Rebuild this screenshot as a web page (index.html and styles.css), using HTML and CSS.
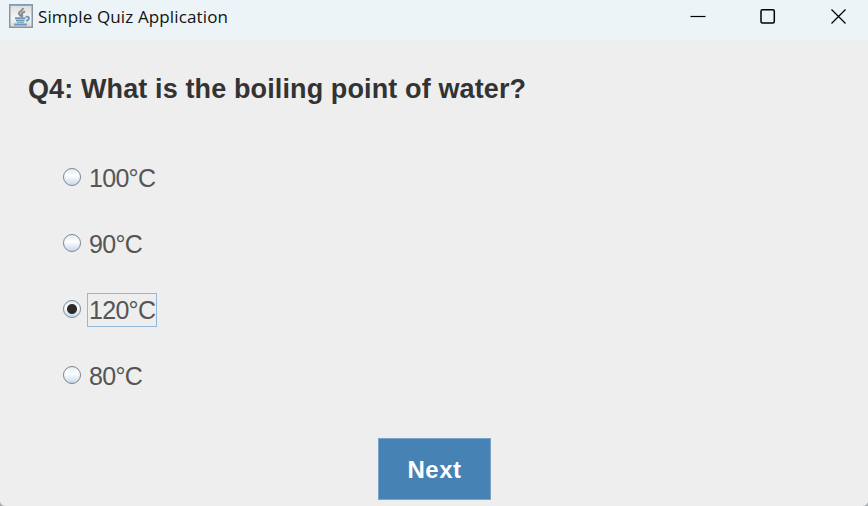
FILE: index.html
```html
<!DOCTYPE html>
<html lang="en">
<head>
    <meta charset="UTF-8">
    <meta name="viewport" content="width=device-width, initial-scale=1.0">
    <title>Simple Quiz Application</title>
    <link rel="stylesheet" href="styles.css">
</head>
<body>
    <div class="window">
        <header class="title-bar">
            <svg class="app-icon" width="24" height="24" viewBox="0 0 24 24">
                <defs>
                    <linearGradient id="icon-bg" x1="0" y1="0" x2="0" y2="1">
                        <stop offset="0" stop-color="#dcdcdc"/>
                        <stop offset="0.6" stop-color="#f6f6f6"/>
                        <stop offset="1" stop-color="#d4d8db"/>
                    </linearGradient>
                </defs>
                <rect x="0.75" y="0.75" width="22.5" height="22.5" fill="url(#icon-bg)" stroke="#8b959d" stroke-width="1.5"/>
                <path d="M1 1h22" stroke="#7ca0c0" stroke-width="1.5"/>
                <path d="M14 4c.5 2.500-4.500 3.500-4 5.500.2 1.300 1.800 1.800 1.500 3.200M16 7.500c-2.500 1-4 2-3 3.300.7 1 .3 1.700-.6 2.200" fill="none" stroke="#85898c" stroke-width="2"/>
                <path d="M6 14.200h10.500M7 16.600h8.500M5 20.500h13" fill="none" stroke="#6c98bd" stroke-width="1.900"/>
                <path d="M8 18.500h7" fill="none" stroke="#8aabc6" stroke-width="1"/>
                <path d="M16.500 12.800c4.500-1 4.500 3 .5 4" fill="none" stroke="#6c98bd" stroke-width="1.900"/>
            </svg>
            <span class="title">Simple Quiz Application</span>
            <div class="controls">
                <svg width="16" height="16" viewBox="0 0 16 16">
                    <path d="M0.500 8.500h15" stroke="#000" stroke-width="1.200"/>
                </svg>
                <svg width="16" height="16" viewBox="0 0 16 16">
                    <rect x="1" y="1.700" width="13.300" height="13.300" rx="1.500" fill="none" stroke="#000" stroke-width="1.500"/>
                </svg>
                <svg width="16" height="16" viewBox="0 0 16 16">
                    <path d="M1.500 1.500l14 14M15.500 1.500l-14 14" stroke="#000" stroke-width="1.300"/>
                </svg>
            </div>
        </header>

        <main class="quiz">
            <h1 class="question">Q4: What is the boiling point of water?</h1>
            <div class="options">
                <label class="option"><span class="radio"></span><span class="label">100°C</span></label>
                <label class="option"><span class="radio"></span><span class="label">90°C</span></label>
                <label class="option"><span class="radio selected"></span><span class="label focused">120°C</span></label>
                <label class="option"><span class="radio"></span><span class="label">80°C</span></label>
            </div>
            <button class="next-button">Next</button>
        </main>
    </div>
</body>
</html>
```

FILE: styles.css
```css
body {
    margin: 0;
    background-color: #a6aaac;
    font-family: "Liberation Sans", Arial, sans-serif;
    color: #333;
}

.window {
    height: 506px;
    background-color: #eee;
    border-radius: 0 0 5px 5px;
    overflow: hidden;
}

.title-bar {
    display: flex;
    height: 40px;
    box-sizing: border-box;
    padding: 4px 22px 0 9px;
    background-color: #ecf4f8;
}

.app-icon {
    flex: none;
}

.title {
    margin-left: 5px;
    font-family: "Open Sans", "Noto Sans", sans-serif;
    font-size: 17px;
    line-height: 26px;
    letter-spacing: 0.13px;
    color: #111;
    white-space: nowrap;
}

.controls {
    display: flex;
    gap: 54px;
    margin-left: auto;
    padding-top: 4px;
}

.quiz {
    display: flex;
    flex-direction: column;
}

.question {
    margin: 32px 0 0 28px;
    font-size: 27px;
    line-height: 34px;
    letter-spacing: 0.12px;
    white-space: nowrap;
}

.options {
    display: flex;
    flex-direction: column;
    gap: 32px;
    margin: 55px 0 0 63px;
}

.option {
    display: flex;
    height: 34px;
}

.radio {
    width: 18px;
    height: 18px;
    box-sizing: border-box;
    margin: 7px 6px 0 0;
    border: 1.5px solid #7c8790;
    border-radius: 50%;
    background: linear-gradient(#dfeaf4, #fff 40%, #c5daed);
}

.radio.selected {
    background: radial-gradient(circle, #2b2b2b 4.5px, transparent 5.5px), linear-gradient(#dfeaf4, #fff 40%, #c5daed);
}

.label {
    box-sizing: border-box;
    height: 34px;
    padding: 0 1px;
    border: 1px solid transparent;
    font-size: 25px;
    line-height: 32px;
    letter-spacing: -0.7px;
    color: #555;
}

.label.focused {
    border-color: #94b9d8;
}

.next-button {
    align-self: flex-start;
    width: 113px;
    height: 62px;
    margin: 45px 0 0 378px;
    padding: 2px 0 0;
    border: 1px solid #79a4c8;
    background-color: #4682b4;
    color: #fff;
    font-family: inherit;
    font-size: 24px;
    font-weight: bold;
    letter-spacing: 0.5px;
}
```
